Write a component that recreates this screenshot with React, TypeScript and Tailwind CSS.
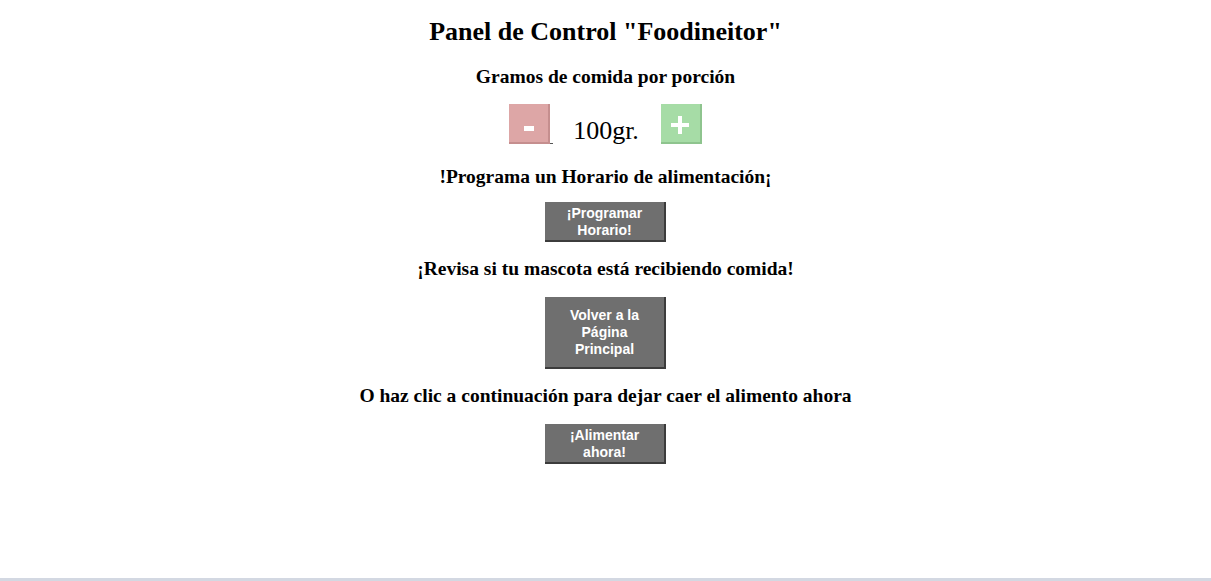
import React from "react";

export default function App() {
  return (
    <div className="w-[1211px] h-[581px] bg-white flex flex-col items-center border-b-[3px] border-[#d3d8e2] text-black" style={{ fontFamily: '"Liberation Serif", "Times New Roman", serif' }}>
      <h1 className="mt-[18px] text-[26px] leading-[28px] font-bold">Panel de Control "Foodineitor"</h1>
      <h2 className="mt-[20px] text-[19.5px] leading-[22px] font-bold">Gramos de comida por porción</h2>
      <div className="mt-[16px] flex items-end h-[40px]">
        <div className="flex items-end">
          <div className="w-[41px] h-[40px] bg-[#dda6a6] border-r-[2px] border-b-[2px] border-[#c58e8e] flex items-center justify-center">
            <div className="w-[10px] h-[5px] bg-white mt-[10px]" />
          </div>
          <div className="w-[3px] h-[1px] bg-[#555]" />
        </div>
        <div className="ml-[20px] text-[26px] leading-[28px] mb-[-1px]">100gr.</div>
        <div className="ml-[22px] w-[41px] h-[40px] bg-[#a6dca6] border-r-[2px] border-b-[2px] border-[#8ec48e] flex items-center justify-center">
          <svg width="18" height="18" viewBox="0 0 18 18" className="mt-[4px]">
            <rect x="7" y="0" width="4" height="18" fill="white" />
            <rect x="0" y="7" width="18" height="4" fill="white" />
          </svg>
        </div>
      </div>
      <h2 className="mt-[22px] text-[19.5px] leading-[22px] font-bold">!Programa un Horario de alimentación¡</h2>
      <button className="mt-[14px] w-[121px] h-[40px] pt-[1px] bg-[#6f6f6f] border-r-[2px] border-b-[2px] border-[#3c3c3c] text-white font-bold text-[14px] leading-[17px] flex items-center justify-center text-center" style={{ fontFamily: '"Liberation Sans", Arial, sans-serif' }}>
        ¡Programar<br />Horario!
      </button>
      <h2 className="mt-[16px] text-[19.5px] leading-[22px] font-bold">¡Revisa si tu mascota está recibiendo comida!</h2>
      <button className="mt-[17px] w-[121px] h-[72px] pt-[1px] bg-[#6f6f6f] border-r-[2px] border-b-[2px] border-[#3c3c3c] text-white font-bold text-[14px] leading-[17px] flex items-center justify-center text-center" style={{ fontFamily: '"Liberation Sans", Arial, sans-serif' }}>
        Volver a la<br />Página<br />Principal
      </button>
      <h2 className="mt-[16px] text-[19.5px] leading-[22px] font-bold">O haz clic a continuación para dejar caer el alimento ahora</h2>
      <button className="mt-[17px] w-[121px] h-[40px] pt-[1px] bg-[#6f6f6f] border-r-[2px] border-b-[2px] border-[#3c3c3c] text-white font-bold text-[14px] leading-[17px] flex items-center justify-center text-center" style={{ fontFamily: '"Liberation Sans", Arial, sans-serif' }}>
        ¡Alimentar<br />ahora!
      </button>
    </div>
  );
}
